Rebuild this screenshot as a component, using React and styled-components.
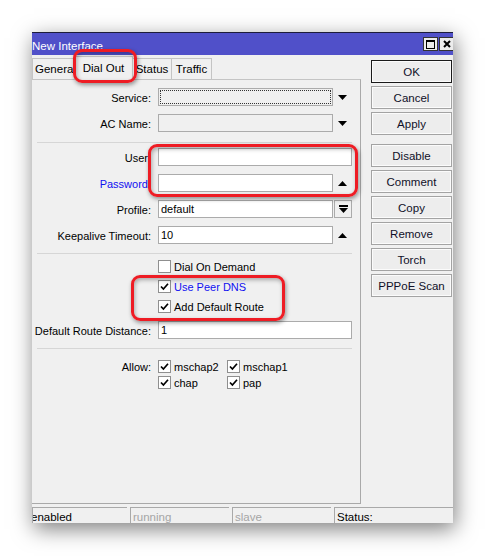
import React from 'react';
import styled, { createGlobalStyle, css } from 'styled-components';

const Global = createGlobalStyle`
  body {
    margin: 0;
    background: #fff;
    font-family: "Liberation Sans", Arial, sans-serif;
    font-size: 11px;
    color: #000;
  }
`;

const Page = styled.div`
  position: relative;
  width: 485px;
  height: 556px;
  overflow: hidden;
  padding: 32px 0 0 32px;
  box-sizing: border-box;
`;

const Window = styled.div`
  width: 421px;
  height: 491px;
  background: #f0f0f0;
  display: flex;
  flex-direction: column;
  box-shadow: 2px 6px 20px rgba(0, 0, 0, 0.5);
  overflow: hidden;
`;

const TitleBar = styled.div`
  height: 22px;
  border-top: 1px solid #1c1c3a;
  background: #5050c9;
  color: #fff;
  display: flex;
  align-items: center;
  justify-content: space-between;
  font-size: 11.5px;
`;

const Title = styled.span`
  padding-top: 4px;
`;

const TitleButtons = styled.div`
  display: flex;
  gap: 1px;
  margin-right: -1px;
`;

const TitleBtn = styled.div`
  width: 15px;
  height: 14px;
  box-sizing: border-box;
  border: 1px solid #333;
  background: #ececec;
  display: flex;
  align-items: center;
  justify-content: center;
`;

const Body = styled.div`
  flex: 1;
  display: flex;
`;

const Main = styled.div`
  width: 329px;
  display: flex;
  flex-direction: column;
`;

const TabStrip = styled.div`
  height: 24px;
  display: flex;
  align-items: flex-end;
`;

const Tab = styled.div`
  width: ${p => p.$w}px;
  height: ${p => (p.$active ? 24 : 21)}px;
  box-sizing: border-box;
  border: 1px solid #c4c4c4;
  border-bottom: none;
  margin-right: -1px;
  margin-bottom: ${p => (p.$active ? -1 : 0)}px;
  background: #f0f0f0;
  text-align: ${p => (p.$left ? 'left' : 'center')};
  padding-left: ${p => (p.$left ? 2 : 0)}px;
  line-height: ${p => (p.$active ? 22 : 21)}px;
  font-size: 11.5px;
  position: relative;
  z-index: ${p => (p.$active ? 1 : 0)};
`;

const Panel = styled.div`
  flex: 1;
  border-top: 1px solid #c4c4c4;
  border-right: 1px solid #a9a9a9;
  border-bottom: 1px solid #a9a9a9;
  padding-top: 8px;
`;

const Row = styled.div`
  display: flex;
  align-items: center;
  height: 18px;
  margin-bottom: ${p => p.$mb ?? 8}px;
`;

const Label = styled.div`
  width: 119px;
  margin-right: 7px;
  text-align: right;
  white-space: nowrap;
  padding-top: 1px;
  color: ${p => (p.$blue ? '#1010f0' : '#000')};
`;

const Field = styled.div`
  width: ${p => (p.$wide ? 194 : 175)}px;
  height: 18px;
  box-sizing: border-box;
  border: 1px solid #ababab;
  background: ${p => (p.$disabled ? '#f0f0f0' : '#fff')};
  padding-left: 2px;
  line-height: 17px;
  ${p =>
    p.$focus &&
    css`
      outline: 1px dotted #333;
      outline-offset: -3px;
    `}
`;

const ArrowCell = styled.div`
  width: 19px;
  height: 18px;
  box-sizing: border-box;
  display: flex;
  align-items: center;
  justify-content: center;
  ${p =>
    p.$boxed &&
    css`
      border: 1px solid #ababab;
      margin-left: 1px;
      width: 18px;
    `}
`;

const Separator = styled.div`
  height: 1px;
  background: #d6d6d6;
  margin: ${p => p.$m};
  margin-left: 5px;
  margin-right: 8px;
`;

const CheckRow = styled.div`
  display: flex;
  align-items: center;
  height: 20px;
  padding-left: 126px;
`;

const CheckLabel = styled.span`
  margin-left: 3px;
  padding-top: 1px;
  color: ${p => (p.$blue ? '#1010f0' : '#000')};
`;

const Box = styled.div`
  width: 13px;
  height: 13px;
  box-sizing: border-box;
  border: 1px solid #8f8f8f;
  background: #fff;
  display: flex;
  align-items: center;
  justify-content: center;
  flex-shrink: 0;
`;

const AllowGrid = styled.div`
  display: grid;
  grid-template-columns: 126px 69px 80px;
  grid-auto-rows: 16px;
  align-items: center;
`;

const AllowLabel = styled.div`
  text-align: right;
  padding-right: 7px;
  padding-top: 1px;
`;

const AllowItem = styled.div`
  display: flex;
  align-items: center;
`;

const Side = styled.div`
  padding: 5px 0 0 10px;
  display: flex;
  flex-direction: column;
`;

const Btn = styled.div`
  width: 81px;
  height: 23px;
  box-sizing: border-box;
  margin-bottom: ${p => (p.$gap ? 9 : 3)}px;
  border: 1px solid ${p => (p.$default ? '#1a1a1a' : '#a3a3a3')};
  box-shadow: inset 0 0 0 1px #fbfbfb;
  background: #ededed;
  display: flex;
  align-items: center;
  justify-content: center;
  padding-top: 1px;
  font-size: 11.5px;
  color: #101028;
`;

const StatusBar = styled.div`
  height: 16px;
  margin-top: 3px;
  display: flex;
  gap: 3px;
`;

const StatusCell = styled.div`
  width: ${p => p.$w}px;
  box-sizing: border-box;
  border-top: 1px solid #a9a9a9;
  border-left: 1px solid #a9a9a9;
  padding-left: ${p => p.$pl ?? 2}px;
  padding-top: 2px;
  line-height: 14px;
  font-size: 11.5px;
  white-space: nowrap;
  overflow: hidden;
  color: ${p => (p.$dim ? '#a5a5a5' : '#000')};
`;

const Highlight = styled.div`
  position: absolute;
  left: ${p => p.$x}px;
  top: ${p => p.$y}px;
  width: ${p => p.$w}px;
  height: ${p => p.$h}px;
  box-sizing: border-box;
  border: 3px solid #ee1c24;
  border-radius: 9px;
  box-shadow: 1px 2px 4px rgba(0, 0, 0, 0.4), inset 1px 2px 4px rgba(0, 0, 0, 0.3);
  z-index: 5;
`;

const Down = () => (
  <svg width="9" height="5" viewBox="0 0 9 5">
    <polygon points="0,0 9,0 4.5,5" fill="#000" />
  </svg>
);

const Up = () => (
  <svg width="9" height="5" viewBox="0 0 9 5">
    <polygon points="0,5 9,5 4.5,0" fill="#000" />
  </svg>
);

const DownBar = () => (
  <svg width="9" height="8" viewBox="0 0 9 8">
    <rect x="0" y="0" width="9" height="2" fill="#000" />
    <polygon points="0,3 9,3 4.5,8" fill="#000" />
  </svg>
);

const Check = ({ on }) => (
  <Box>
    {on && (
      <svg width="9" height="9" viewBox="0 0 9 9">
        <path d="M1 4.5 L3.4 7 L8 1.8" stroke="#000" strokeWidth="1.7" fill="none" />
      </svg>
    )}
  </Box>
);

export default function App() {
  return (
    <Page>
      <Global />
      <Window>
        <TitleBar>
          <Title>New Interface</Title>
          <TitleButtons>
            <TitleBtn>
              <svg width="9" height="9" viewBox="0 0 9 9">
                <rect x="0.5" y="0.5" width="8" height="8" fill="none" stroke="#000" />
                <rect x="0" y="0" width="9" height="2" fill="#000" />
              </svg>
            </TitleBtn>
            <TitleBtn>
              <svg width="8" height="8" viewBox="0 0 8 8">
                <path d="M1 1 L7 7 M7 1 L1 7" stroke="#000" strokeWidth="2" />
              </svg>
            </TitleBtn>
          </TitleButtons>
        </TitleBar>
        <Body>
          <Main>
            <TabStrip>
              <Tab $w={43} $left>General</Tab>
              <Tab $w={59} $active>Dial Out</Tab>
              <Tab $w={40}>Status</Tab>
              <Tab $w={41}>Traffic</Tab>
            </TabStrip>
            <Panel>
              <Row>
                <Label>Service:</Label>
                <Field $disabled $focus />
                <ArrowCell><Down /></ArrowCell>
              </Row>
              <Row $mb={0}>
                <Label>AC Name:</Label>
                <Field $disabled />
                <ArrowCell><Down /></ArrowCell>
              </Row>
              <Separator $m="10px 0 5px" />
              <Row>
                <Label>User:</Label>
                <Field $wide />
              </Row>
              <Row>
                <Label $blue>Password:</Label>
                <Field />
                <ArrowCell><Up /></ArrowCell>
              </Row>
              <Row>
                <Label>Profile:</Label>
                <Field>default</Field>
                <ArrowCell $boxed><DownBar /></ArrowCell>
              </Row>
              <Row $mb={0}>
                <Label>Keepalive Timeout:</Label>
                <Field>10</Field>
                <ArrowCell><Up /></ArrowCell>
              </Row>
              <Separator $m="9px 0 2px" />
              <CheckRow>
                <Check />
                <CheckLabel>Dial On Demand</CheckLabel>
              </CheckRow>
              <CheckRow>
                <Check on />
                <CheckLabel $blue>Use Peer DNS</CheckLabel>
              </CheckRow>
              <CheckRow>
                <Check on />
                <CheckLabel>Add Default Route</CheckLabel>
              </CheckRow>
              <Row $mb={0} style={{ marginTop: 5 }}>
                <Label>Default Route Distance:</Label>
                <Field $wide>1</Field>
              </Row>
              <Separator $m="9px 0 9px" />
              <AllowGrid>
                <AllowLabel>Allow:</AllowLabel>
                <AllowItem><Check on /><CheckLabel>mschap2</CheckLabel></AllowItem>
                <AllowItem><Check on /><CheckLabel>mschap1</CheckLabel></AllowItem>
                <div />
                <AllowItem><Check on /><CheckLabel>chap</CheckLabel></AllowItem>
                <AllowItem><Check on /><CheckLabel>pap</CheckLabel></AllowItem>
              </AllowGrid>
            </Panel>
          </Main>
          <Side>
            <Btn $default>OK</Btn>
            <Btn>Cancel</Btn>
            <Btn $gap>Apply</Btn>
            <Btn>Disable</Btn>
            <Btn>Comment</Btn>
            <Btn>Copy</Btn>
            <Btn>Remove</Btn>
            <Btn>Torch</Btn>
            <Btn>PPPoE Scan</Btn>
          </Side>
        </Body>
        <StatusBar>
          <StatusCell $w={95} $pl={0}><span style={{ marginLeft: -2 }}>enabled</span></StatusCell>
          <StatusCell $w={99} $dim>running</StatusCell>
          <StatusCell $w={99} $dim>slave</StatusCell>
          <StatusCell $w={119}>Status:</StatusCell>
        </StatusBar>
      </Window>
      <Highlight $x={73} $y={49} $w={64} $h={34} />
      <Highlight $x={148} $y={144} $w={210} $h={53} />
      <Highlight $x={131} $y={275} $w={154} $h={46} />
    </Page>
  );
}
